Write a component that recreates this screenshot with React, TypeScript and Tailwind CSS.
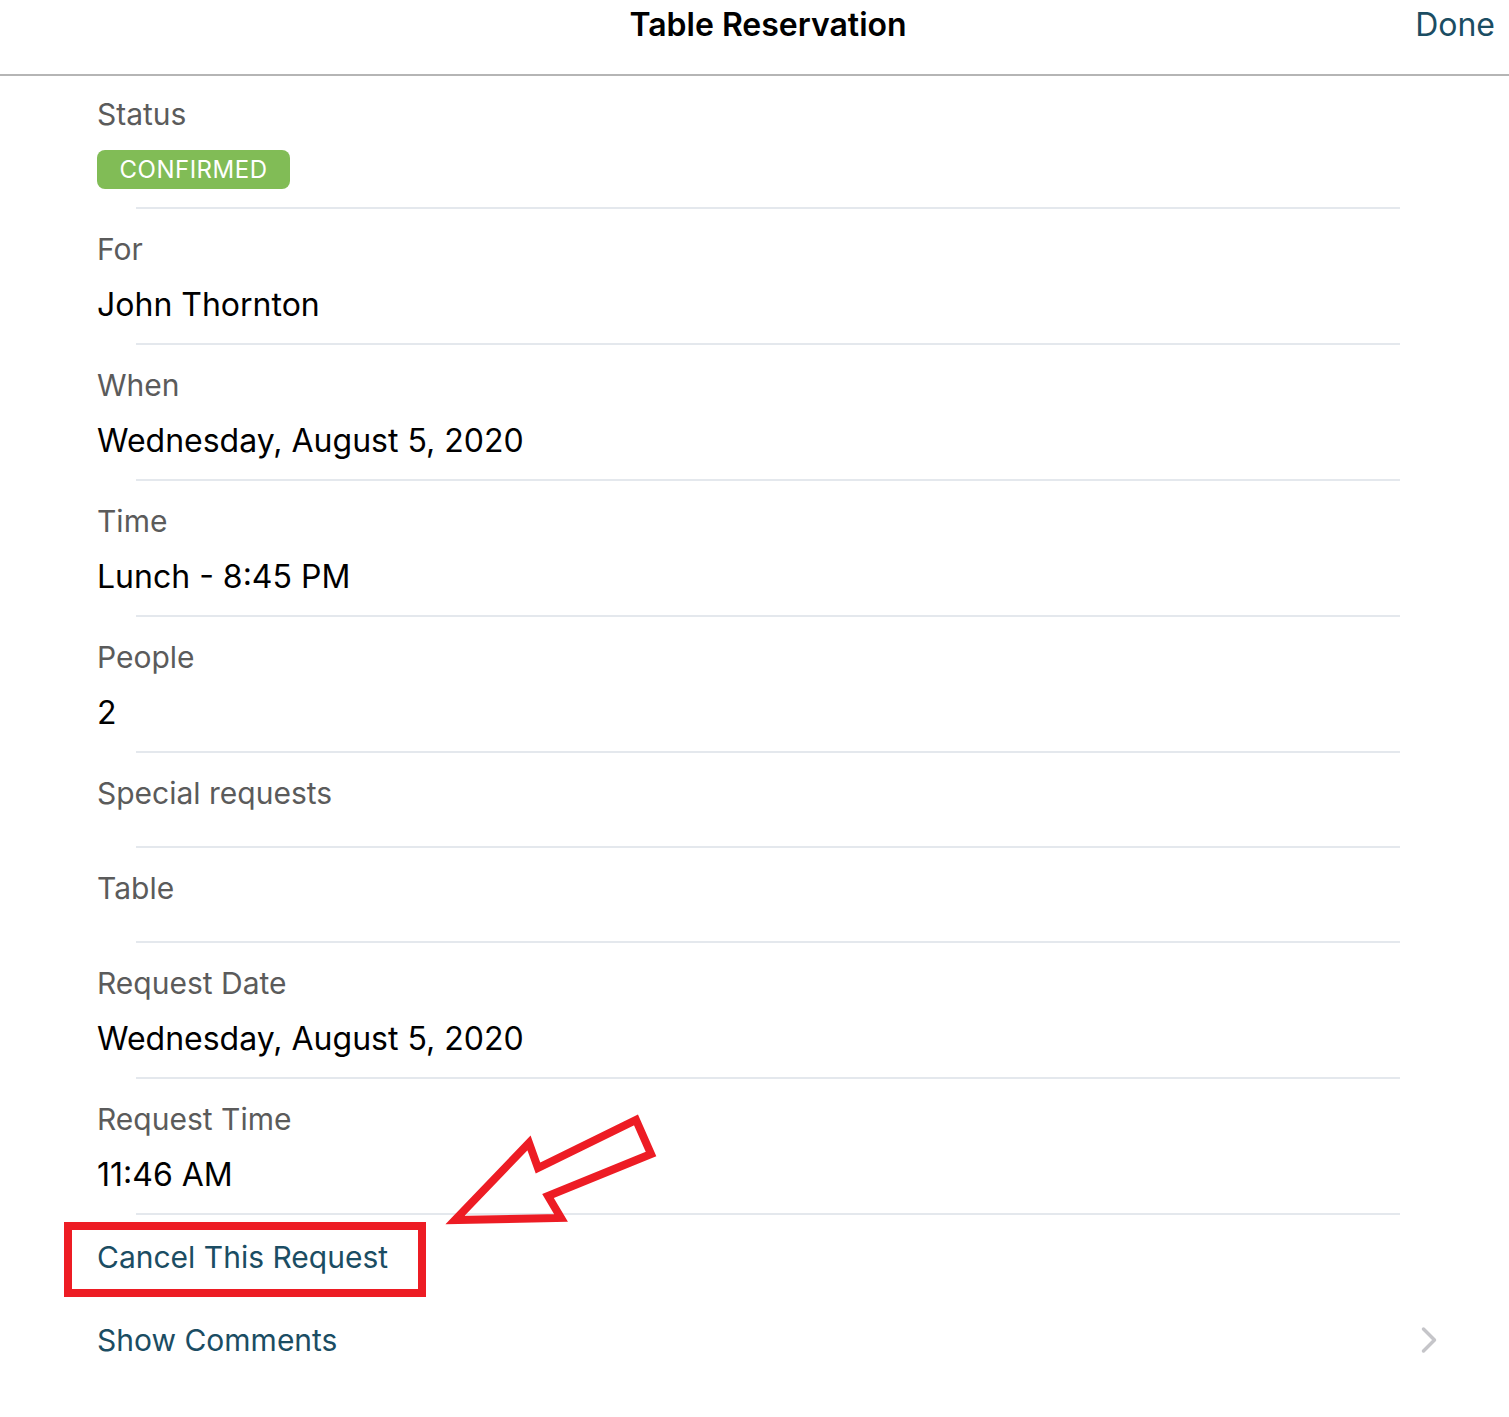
import { ChevronRight } from "lucide-react";

const rows: { label: string; value?: string }[] = [
  { label: "For", value: "John Thornton" },
  { label: "When", value: "Wednesday, August 5, 2020" },
  { label: "Time", value: "Lunch - 8:45 PM" },
  { label: "People", value: "2" },
  { label: "Special requests" },
  { label: "Table" },
  { label: "Request Date", value: "Wednesday, August 5, 2020" },
  { label: "Request Time", value: "11:46 AM" },
];

function Separator() {
  return <div className="ml-[136px] mr-[109px] h-[2px] bg-[#e4e8ed]" />;
}

function DetailRow({ label, value }: { label: string; value?: string }) {
  return (
    <>
      <div className={`pl-[97px] pt-[22px] ${value ? "pb-[18px]" : "pb-[35px]"}`}>
        <div className="text-[30px] leading-[36px] text-[#5b5b5b]">{label}</div>
        {value && (
          <div className="mt-[18px] text-[32px] leading-[40px] text-black">{value}</div>
        )}
      </div>
      <Separator />
    </>
  );
}

export default function App() {
  return (
    <div
      className="relative min-h-[1417px] w-[1509px] bg-white"
      style={{ fontFamily: "Inter, 'Noto Sans', sans-serif" }}
    >
      {/* Header */}
      <header className="relative h-[76px] border-b-[2px] border-[#b5b5b5]">
        <div className="flex justify-center pl-[27px] pt-[5px]">
          <h1 className="text-[32px] font-semibold leading-[40px] text-black">Table Reservation</h1>
        </div>
        <button className="absolute right-[14px] top-[5px] text-[32px] leading-[40px] text-[#1b4d63]">
          Done
        </button>
      </header>

      {/* Status */}
      <div className="pl-[97px] pt-[20px] pb-[18px]">
        <div className="text-[30px] leading-[36px] text-[#5b5b5b]">Status</div>
        <div className="mt-[18px] inline-flex h-[39px] w-[193px] items-center justify-center rounded-[8px] bg-[#81bc56] text-[24px] tracking-[0.5px] text-white">
          CONFIRMED
        </div>
      </div>
      <Separator />

      {rows.map((r) => (
        <DetailRow key={r.label} label={r.label} value={r.value} />
      ))}

      {/* Actions */}
      <div className="pl-[64px] pt-[7px]">
        <div className="flex h-[75px] w-[362px] items-center border-[8px] border-[#ed1c24] pb-[5px] pl-[25px]">
          <span className="text-[30px] leading-[36px] text-[#1b4d63]">Cancel This Request</span>
        </div>
      </div>
      <div className="flex items-center justify-between pl-[97px] pr-[58px] pt-[21px]">
        <span className="text-[30px] leading-[36px] text-[#1b4d63]">Show Comments</span>
        <ChevronRight className="h-[44px] w-[44px] text-[#c5c5c9]" strokeWidth={1.9} />
      </div>

      {/* Annotation arrow */}
      <svg
        className="pointer-events-none absolute left-0 top-0"
        width="1509"
        height="1417"
        viewBox="0 0 1509 1417"
      >
        <polygon
          points="455,1220 529,1143 538,1168 636,1120 651,1154 548,1196 561,1218"
          fill="none"
          stroke="#ed1c24"
          strokeWidth="8"
          strokeLinejoin="miter"
        />
      </svg>
    </div>
  );
}
